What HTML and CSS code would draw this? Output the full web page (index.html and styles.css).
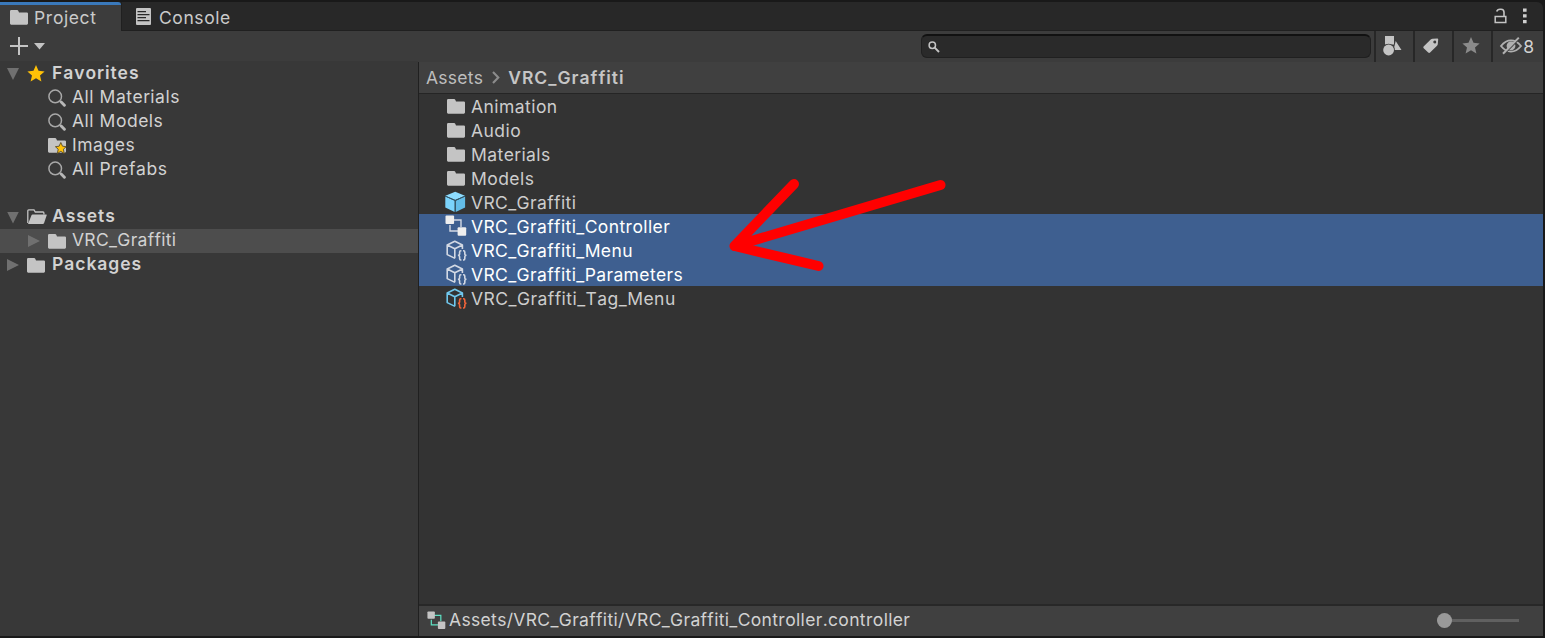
FILE: index.html
```html
<!DOCTYPE html>
<html lang="en">
<head>
<meta charset="utf-8">
<title>Project</title>
<link rel="stylesheet" href="styles.css">
</head>
<body>
<svg class="defs" aria-hidden="true">
  <symbol id="folder" viewBox="0 0 18 15"><path d="M0 1.2Q0 0 1.2 0H7Q8 0 8.4 1L9 2.4H16.8Q18 2.4 18 3.6V13.6Q18 14.7 16.8 14.7H1.2Q0 14.7 0 13.6Z" fill="#c4c4c4"/></symbol>
  <symbol id="magnifier" viewBox="0 0 18 18"><circle cx="7.2" cy="7.4" r="6.3" fill="none" stroke="#a8a8a8" stroke-width="1.5"/><path d="M13.2 13L16.4 16.2" stroke="#b8b8b8" stroke-width="2.9" stroke-linecap="round"/></symbol>
  <symbol id="star" viewBox="0 0 18 17"><path d="M9 0L11.5 5.7L17.6 6.4L13 10.4L14.4 16.5L9 13.3L3.6 16.5L5 10.4L.4 6.4L6.5 5.7Z"/></symbol>
  <symbol id="scriptable" viewBox="0 0 22 22"><path d="M9 18.400L1.200 14.600V5L8.800 1.200L16.400 5V9M1.200 5L8.800 8.800L16.400 5M8.800 8.800V18.200" fill="none" stroke="currentColor" stroke-width="1.600" stroke-linejoin="round"/><path class="braces" d="M15.400 10.800H14.800Q13.600 10.800 13.600 12.200V13.900Q13.600 15.300 11.900 15.300Q13.600 15.300 13.600 16.700V18.600Q13.600 20 14.800 20H15.400M17 10.800H17.600Q18.800 10.800 18.800 12.200V13.900Q18.800 15.300 20.500 15.300Q18.800 15.300 18.800 16.700V18.600Q18.800 20 17.600 20H17" fill="none" stroke-width="1.600"/></symbol>
  <symbol id="controller" viewBox="0 0 22 22"><path d="M8 5H16V12M5 10V16H13" fill="none" stroke="currentColor" stroke-width="1.4"/><rect x="0.500" y="0.500" width="8.600" height="8.400" rx="1" class="node"/><rect x="12.600" y="12.300" width="8.600" height="8.400" rx="1" class="node"/></symbol>
</svg>
<div class="window">
  <header class="tabs">
    <div class="tab active"><svg class="folder"><use href="#folder"/></svg><span>Project</span></div>
    <div class="tab console"><svg class="doc" viewBox="0 0 15 17"><rect width="15" height="17" rx="1" fill="#c4c4c4"/><path d="M1.5 3.700H10M1.500 6.700H13.500M1.500 9.700H10M1.500 12.700H13.500" stroke="#282828" stroke-width="1.3"/></svg><span>Console</span></div>
    <div class="window-tools">
      <svg class="lock" viewBox="0 0 13 16"><path d="M1.2 8.600H11.800V14.600H1.200Z" fill="none" stroke="#c4c4c4" stroke-width="1.5"/><path d="M2.700 3.500Q3.300 1.200 6 1.200H7Q10 1.200 10 4.200V8" fill="none" stroke="#c4c4c4" stroke-width="1.6"/></svg>
      <svg class="dots" viewBox="0 0 4 16"><path d="M0 .5H3.600V3.800H0ZM0 6.200H3.600V9.500H0ZM0 12H3.600V15.300H0Z" fill="#d0d0d0"/></svg>
    </div>
  </header>
  <div class="toolbar">
    <svg class="plus" viewBox="0 0 18 18"><path d="M9 0V18M0 9H18" stroke="#c4c4c4" stroke-width="2"/></svg>
    <svg class="caret" viewBox="0 0 11 7"><path d="M0 0H11L5.500 6.500Z" fill="#c4c4c4"/></svg>
    <div class="search"><svg viewBox="0 0 12 12"><circle cx="4.300" cy="4.300" r="3.200" fill="none" stroke="#c4c4c4" stroke-width="1.500"/><path d="M6.700 6.700L11 11" stroke="#c4c4c4" stroke-width="1.900"/></svg></div>
    <div class="tool"><svg class="shapes" viewBox="0 0 19 20"><path d="M2 0H11V8.500H2ZM12.700 5L18.500 14H10.500Z" fill="#c4c4c4"/><circle cx="5.600" cy="14" r="6.200" fill="#3c3c3c"/><circle cx="5.600" cy="14" r="5.400" fill="#c4c4c4"/></svg></div>
    <div class="tool"><svg class="tag" viewBox="0 0 16 16"><path fill-rule="evenodd" d="M.6 8.500L7.700 1.600Q8.500 .9 9.600.8L14.400.5Q15.200.5 15.200 1.300L14.800 6Q14.700 7 14 7.700L7.100 14.600Q6.200 15.500 5.200 14.600L.7 10.200Q-.2 9.400 .6 8.500ZM11.700 2.500A1.500 1.500 0 1 0 11.800 5.500A1.500 1.500 0 1 0 11.700 2.500Z" fill="#c4c4c4"/></svg></div>
    <div class="tool"><svg class="star gray"><use href="#star"/></svg></div>
    <div class="tool hidden-count"><svg class="eye" viewBox="0 0 22 18"><path d="M1 9Q5.500 3.400 11 3.400Q16.500 3.400 21 9Q16.500 14.600 11 14.600Q5.500 14.600 1 9Z" fill="none" stroke="#b0b0b0" stroke-width="1.900"/><circle cx="11" cy="8.800" r="4.400" fill="#b0b0b0"/><path d="M4.500 16.800L19 2" stroke="#3c3c3c" stroke-width="1.500"/><path d="M3 16.800L18.800 .6" stroke="#b0b0b0" stroke-width="2"/></svg><span>8</span></div>
  </div>
  <main class="body">
    <nav class="tree">
      <div class="node-row bold"><i class="open"></i><svg class="star yellow"><use href="#star"/></svg><span>Favorites</span></div>
      <div class="node-row child"><svg class="mag"><use href="#magnifier"/></svg><span>All Materials</span></div>
      <div class="node-row child"><svg class="mag"><use href="#magnifier"/></svg><span>All Models</span></div>
      <div class="node-row child"><svg class="image-folder" viewBox="0 0 18 16"><use href="#folder" width="18" height="15"/><path d="M12.800 4.500L14.500 8.200L18.200 8.700L15.400 11.200L16.200 15.500L12.800 13.300L9.400 15.500L10.200 11.200L7.400 8.700L11.100 8.200Z" fill="#ffc107" stroke="#5a4c28" stroke-width=".9"/></svg><span>Images</span></div>
      <div class="node-row child"><svg class="mag"><use href="#magnifier"/></svg><span>All Prefabs</span></div>
      <div class="node-row bold assets"><i class="open"></i><svg class="open-folder" viewBox="0 0 20 16"><path d="M.8 14V1.700Q.8.8 1.700.8H7L8.300 3H16Q16.900 3 16.900 4V5.500" fill="none" stroke="#c4c4c4" stroke-width="1.300"/><path d="M1 15L4.500 6.200Q4.800 5.500 5.600 5.500H19.200Q20 5.500 19.700 6.300L17 14.200Q16.700 15 15.800 15Z" fill="#c4c4c4"/></svg><span>Assets</span></div>
      <div class="node-row current"><i class="closed"></i><svg class="folder"><use href="#folder"/></svg><span>VRC_Graffiti</span></div>
      <div class="node-row bold packages"><i class="closed"></i><svg class="folder"><use href="#folder"/></svg><span>Packages</span></div>
    </nav>
    <section class="browser">
      <div class="breadcrumb"><span>Assets</span><svg viewBox="0 0 8 13"><path d="M1 1L6.300 6.400L1 12" fill="none" stroke="#8c8c8c" stroke-width="2.100"/></svg><b>VRC_Graffiti</b></div>
      <div class="files">
        <div class="file"><svg class="folder"><use href="#folder"/></svg><span>Animation</span></div>
        <div class="file"><svg class="folder"><use href="#folder"/></svg><span>Audio</span></div>
        <div class="file"><svg class="folder"><use href="#folder"/></svg><span>Materials</span></div>
        <div class="file"><svg class="folder"><use href="#folder"/></svg><span>Models</span></div>
        <div class="file prefixed"><svg class="asset" viewBox="0 0 22 22"><path d="M10.200 .8L20 4.700L10.200 9L.4 4.700Z" fill="#8ddcff"/><path d="M.3 5.600L9.700 9.800V21L.3 16.400Z" fill="#7bd3fb"/><path d="M10.700 9.800L20.100 5.600V16.400L10.700 21Z" fill="#63bce7"/><path d="M.4 5.100L10.200 9.400L20 5.100M10.200 9.400V21" fill="none" stroke="#31596d" stroke-width="1"/></svg><span>VRC_Graffiti</span></div>
        <div class="file prefixed selected"><svg class="asset"><use href="#controller"/></svg><span>VRC_Graffiti_Controller</span></div>
        <div class="file prefixed selected"><svg class="asset script"><use href="#scriptable"/></svg><span>VRC_Graffiti_Menu</span></div>
        <div class="file prefixed selected"><svg class="asset script"><use href="#scriptable"/></svg><span>VRC_Graffiti_Parameters</span></div>
        <div class="file"><svg class="asset script tinted"><use href="#scriptable"/></svg><span>VRC_Graffiti_Tag_Menu</span></div>
      </div>
      <footer class="status"><svg class="asset"><use href="#controller"/></svg><span>Assets/VRC_Graffiti/VRC_Graffiti_Controller.controller</span><div class="slider"><i></i></div></footer>
    </section>
  </main>
  <svg class="arrow" viewBox="0 0 230 100"><path d="M215.500 10L9.500 71L69 9M9.500 71L93.500 91" fill="none" stroke="#f00" stroke-width="10" stroke-linecap="round" stroke-linejoin="round"/></svg>
</div>
</body>
</html>
```
FILE: styles.css
```css
* { box-sizing: border-box; }
body { margin: 0; background: #191919; font: 17.5px/24px Inter, sans-serif; font-kerning: none; letter-spacing: .45px; color: #d2d2d2; }
svg { display: block; flex: none; overflow: visible; }
.defs { position: absolute; width: 0; height: 0; }
.window { position: relative; width: 1545px; height: 638px; padding: 2px 2px 2px 0; display: flex; flex-direction: column; overflow: hidden; }
.folder { width: 18px; height: 15px; }

.tabs { height: 29px; flex: none; display: flex; background: #282828; border-radius: 0 6px 0 0; letter-spacing: .58px; }
.tab { display: flex; align-items: center; padding-left: 10px; border-bottom: 1px solid #202020; color: #cacaca; }
.tab.active { width: 121px; gap: 6px; background: #3c3c3c; border-top: 3px solid #3a79bb; border-bottom: 0; border-radius: 0 3px 0 0; }
.tab.active svg { margin-top: -2px; }
.tab.active span { margin-top: -1px; }
.console { flex: 1; gap: 8px; padding: 2px 0 0 14px; border-left: 1px solid #202020; }
.console span { margin-top: 2px; }
.doc { width: 15px; height: 17px; margin-top: -2px; }
.window-tools { display: flex; gap: 16px; padding: 6px 16px 0 0; border-bottom: 1px solid #202020; }
.lock { width: 13px; height: 16px; }
.dots { width: 4px; height: 16px; }

.toolbar { height: 31px; flex: none; display: flex; align-items: center; background: #3c3c3c; }
.plus { width: 18px; height: 18px; margin: -1px 0 0 10px; }
.caret { width: 11px; height: 7px; margin-left: 6px; }
.search { width: 450px; height: 24px; margin: -1px 3px 0 auto; padding: 5px 6px; background: #2a2a2a; border: 1px solid #202020; border-top: 2px solid #111; border-radius: 6px; }
.search svg { width: 12px; height: 12px; }
.tool { width: 39px; height: 31px; display: flex; align-items: center; justify-content: center; border-left: 2px solid #272727; padding: 0 4px 2px 0; }
.shapes { width: 19px; height: 20px; }
.tag { width: 16px; height: 16px; margin-right: 2px; }
.star { width: 18px; height: 17px; }
.gray { fill: #8b8b8b; }
.yellow { fill: #ffc107; }
.hidden-count { width: 52px; padding: 0 1px 2px 0; gap: 1px; }
.hidden-count span { margin-top: 2px; }
.eye { width: 22px; height: 18px; }

.body { flex: 1; min-height: 0; display: grid; grid-template-columns: 418px 1fr; }
.tree { background: #383838; margin-top: -1px; }
.node-row { height: 24px; display: flex; align-items: center; padding-left: 7px; }
.node-row svg { margin-right: 6px; }
.bold { font-weight: 600; letter-spacing: .95px; }
.node-row i { width: 12px; height: 12px; margin-right: 8px; background: #707070; flex: none; }
.node-row .open { clip-path: polygon(0 0, 100% 0, 50% 100%); margin-top: 2px; }
.node-row .closed { clip-path: polygon(0 0, 100% 50%, 0 100%); }
.node-row .yellow { margin-right: 7px; }
.child { padding-left: 48px; letter-spacing: .52px; }
.mag { width: 18px; height: 18px; margin-top: 1px; }
.image-folder { width: 18px; height: 16px; margin-top: 2px; }
.assets { margin-top: 23px; height: 25px; }
.assets span, .current span, .packages span { margin-top: -2px; }
.open-folder { width: 20px; height: 16px; }
.node-row .open-folder { margin-right: 5px; }
.current { padding-left: 28px; background: #4d4d4d; letter-spacing: .3px; }
.packages .folder { margin-right: 7px; }

.browser { min-width: 0; display: flex; flex-direction: column; border-left: 1px solid #202020; background: #333; }
.breadcrumb { height: 32px; flex: none; display: flex; align-items: center; padding-left: 7px; background: #404040; border-bottom: 1px solid #252525; color: #bdbdbd; letter-spacing: .25px; }
.breadcrumb svg { width: 8px; height: 13px; margin: 0 8px 0 9px; }
.breadcrumb b { font-weight: 600; color: #c6c6c6; letter-spacing: 1px; }
.files { flex: 1; }
.file { height: 24px; display: flex; align-items: center; padding-left: 26px; color: #cdcdcd; }
.file span { margin-top: 2px; }
.file .folder { margin: 0 6px 0 2px; }
.prefixed { letter-spacing: .38px; }
.file .asset { margin-right: 4px; }
.file .script { margin: 1px 3px 0 1px; }
.asset { width: 22px; height: 22px; --node: #c4c4c4; --brace: currentColor; }
.node { fill: var(--node); }
.braces { stroke: var(--brace); }
.selected { background: #3e5f90; color: #fff; }
.selected .asset { color: #d3d9e4; --node: #eee; }
.file .tinted { color: #70c8ee; --brace: #f36439; }
.status { height: 32px; flex: none; display: flex; align-items: center; padding: 0 0 2px 8px; background: #404040; border-top: 2px solid #282828; letter-spacing: .33px; }
.status .asset { color: #5de0c2; width: 19px; height: 19px; margin-right: 3px; }
.slider { width: 82px; height: 3px; margin: 0 24px 0 auto; background: #606060; }
.slider i { display: block; width: 15px; height: 15px; margin-top: -6px; border-radius: 50%; background: #999; }
.arrow { position: absolute; left: 725px; top: 175px; width: 230px; height: 100px; }
```
